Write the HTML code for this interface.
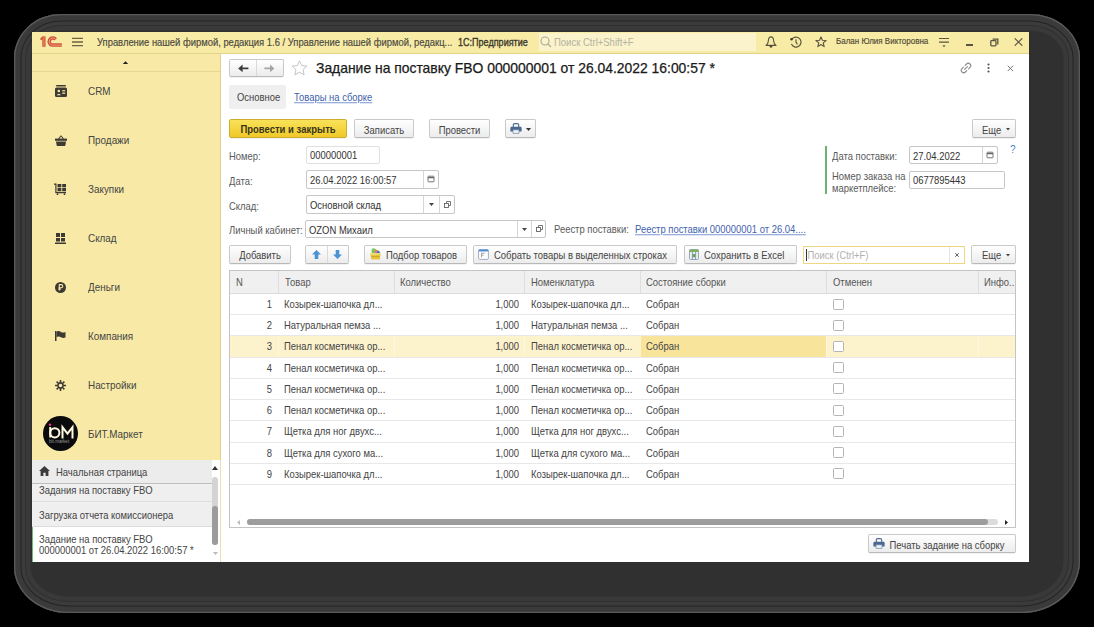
<!DOCTYPE html>
<html><head><meta charset="utf-8">
<style>
*{box-sizing:border-box;margin:0;padding:0}
html,body{width:1094px;height:627px;overflow:hidden;background:#000}
body{position:relative;font-family:"Liberation Sans",sans-serif;font-size:9.45px;color:#404040;}
.a{position:absolute;white-space:nowrap}
#frame{position:absolute;left:14px;top:14px;width:1066px;height:599px;border-radius:47px 50px 58px 54px / 44px 44px 52px 46px;background:#303030;box-shadow:inset 0 0 0 1.3px #5a5a5a, inset 0 0 0 6.5px #3a3a3a, inset 0 0 0 7.5px #242424, inset 0 0 0 11px #3b3b3b, inset 0 0 0 12px #2f2f2f, inset 0 0 0 16.5px #393939}
#app{position:absolute;left:32px;top:32px;width:997px;height:530px;background:#fff;overflow:hidden}
#titlebar{position:absolute;left:32px;top:32px;width:997px;height:22px;background:#f8eba6;border-bottom:1.5px solid #e2d38a}
#side{position:absolute;left:32px;top:54px;width:189px;height:406px;background:#f8eaa6;border-right:1px solid #e4d48c}
.btn{position:absolute;height:19px;border:1px solid #c9c9c9;border-bottom-color:#b9b9b9;border-radius:2px;background:linear-gradient(#ffffff,#ececec);box-shadow:0 1px 0 rgba(0,0,0,.05);color:#444;text-align:center;line-height:17px;padding-top:1.5px;white-space:nowrap}
.fld{position:absolute;height:18px;border:1px solid #c6c6c6;border-radius:2px;background:#fff;color:#333;line-height:17px;padding-left:3px;white-space:nowrap}
.lbl{position:absolute;color:#5a5a5a;white-space:nowrap}
.si{position:absolute;left:88px;color:#444;font-size:9.9px;white-space:nowrap}
.ic{position:absolute}
.t{display:inline-block;transform:scaleY(1.14);transform-origin:50% 75%}
</style></head><body>
<div id="frame"></div>
<div id="app"></div>
<div id="titlebar"></div>
<!-- title bar content -->
<svg class="ic" style="left:36px;top:33px" width="30" height="18" viewBox="0 0 30 18"><g fill="none" stroke-linecap="butt"><path d="M7.9 13.8V3.4" stroke="#cf5438" stroke-width="3.3"/><path d="M4.6 6.6L7 4.3" stroke="#cf5438" stroke-width="2"/><path d="M7.9 13.6V4" stroke="#f0a07c" stroke-width="0.8"/><path d="M19.6 6.4A3.55 3.55 0 1 0 16.6 12.1H25.8" stroke="#cf5438" stroke-width="3.5"/><path d="M19.6 6.4A3.55 3.55 0 1 0 16.6 12.1H25.8" stroke="#f2a384" stroke-width="0.9"/></g></svg>
<svg class="ic" style="left:72px;top:37px" width="11" height="10" viewBox="0 0 11 10">
  <g stroke="#6b6446" stroke-width="1.3"><path d="M0 1.3H11M0 5H11M0 8.7H11"/></g>
</svg>
<div class="a" style="left:97px;top:37px;font-size:9.42px;line-height:12px;color:#4a4a40;-webkit-text-stroke:0.15px #4a4a40"><span class="t">Управление нашей фирмой, редакция 1.6 / Управление нашей фирмой, редакц...</span></div>
<div class="a" style="left:458px;top:37px;font-size:9.05px;line-height:12px;color:#3a372c;-webkit-text-stroke:0.3px #3a372c"><span class="t">1С:Предприятие</span></div>
<div class="a" style="left:539px;top:33px;width:217px;height:18px;background:#fbf3cb"></div>
<svg class="ic" style="left:540px;top:36px" width="12" height="12" viewBox="0 0 12 12"><g fill="none" stroke="#aaa896" stroke-width="1.1"><circle cx="5" cy="5" r="4"/><path d="M8 8L11 11"/></g></svg>
<div class="a" style="left:554px;top:37px;font-size:9.5px;line-height:12px;color:#b4b2a2"><span class="t">Поиск Ctrl+Shift+F</span></div>
<!-- bell -->
<svg class="ic" style="left:765px;top:36px" width="12" height="12" viewBox="0 0 12 12"><g fill="none" stroke="#5a5540" stroke-width="1.15" stroke-linejoin="round"><path d="M6 0.9C4 0.9 3.4 2.8 3.3 5.2C3.2 7.2 2.6 8 1 9.4H11C9.4 8 8.8 7.2 8.7 5.2C8.6 2.8 8 0.9 6 0.9Z"/></g><path d="M4.3 9.8H7.7Q7.4 11.8 6 11.8Q4.6 11.8 4.3 9.8Z" fill="#4a4636"/></svg>
<!-- history -->
<svg class="ic" style="left:790px;top:36px" width="12" height="12" viewBox="0 0 12 12"><g fill="none" stroke="#5a5540" stroke-width="1.15"><path d="M1.9 3.2A5 5 0 1 1 1.4 8"/><path d="M6 3.3V6.3L7.5 8.4"/></g><circle cx="1.5" cy="3.3" r="1.25" fill="#3d3a2c"/></svg>
<!-- star -->
<svg class="ic" style="left:815px;top:36px" width="12" height="12" viewBox="0 0 12 12"><path d="M6 0.9L7.4 4.3L11.1 4.5L8.2 6.9L9.2 10.6L6 8.5L2.8 10.6L3.8 6.9L0.9 4.5L4.6 4.3Z" fill="none" stroke="#5a5540" stroke-width="1.1" stroke-linejoin="round"/></svg>
<div class="a" style="left:836px;top:36px;font-size:8px;line-height:12px;color:#4f4a38;-webkit-text-stroke:0.15px #4f4a38"><span class="t">Балан Юлия Викторовна</span></div>
<svg class="ic" style="left:939px;top:37px" width="10" height="11" viewBox="0 0 10 11"><g stroke="#5a5540" stroke-width="1.2"><path d="M0 1.5H10M0 5.2H10"/></g><path d="M3.3 8.4H6.7L5 10Z" fill="#3a3628"/></svg>
<div class="a" style="left:966px;top:44px;width:7px;height:1.5px;background:#5a5540"></div>
<svg class="ic" style="left:990px;top:38px" width="9" height="9" viewBox="0 0 9 9"><g fill="none" stroke="#5a5540" stroke-width="1.3"><rect x="0.8" y="2.6" width="5.2" height="5.2" rx="0.8"/><path d="M2.6 1.2H7.8V6.4"/></g></svg>
<svg class="ic" style="left:1014px;top:38px" width="9" height="8" viewBox="0 0 9 8"><g stroke="#5a5540" stroke-width="1.1"><path d="M0.7 0.3L8.3 7.7M8.3 0.3L0.7 7.7"/></g></svg>

<div id="side"></div>
<div class="a" style="left:32px;top:71px;width:188px;height:1px;background:#e6d690"></div>
<svg class="ic" style="left:122px;top:60.5px" width="7" height="3.5" viewBox="0 0 7 3.5"><path d="M0.3 3.5H6.7L3.5 0.3Z" fill="#222"/></svg>
<!-- CRM icon -->
<svg class="ic" style="left:55px;top:85px" width="12" height="12" viewBox="0 0 12 12"><g fill="#3d3a33"><rect x="1" y="0" width="10" height="1.6" rx="0.8"/><rect x="0" y="2.6" width="12" height="9.4" rx="1.5"/></g><g fill="#f8eaa6"><circle cx="3.8" cy="6" r="1.3"/><path d="M1.6 10.2 Q3.8 7.2 6 10.2Z"/><rect x="7.2" y="5.2" width="3" height="1.2"/><rect x="7.2" y="7.6" width="3" height="1.2"/></g></svg>
<div class="si" style="top:86px;line-height:12px"><span class="t">CRM</span></div>
<!-- basket -->
<svg class="ic" style="left:55px;top:135px" width="12" height="11" viewBox="0 0 12 11"><g fill="#3d3a33"><path d="M3 4 L5.5 0.5 L6.3 1 L4.3 4Z M9 4 L6.5 0.5 L5.7 1 L7.7 4Z"/><rect x="0" y="3.6" width="12" height="2.2"/><path d="M1 6.4H11L10.2 11H1.8Z"/></g></svg>
<div class="si" style="top:135px;line-height:12px"><span class="t">Продажи</span></div>
<!-- cart -->
<svg class="ic" style="left:54px;top:183px" width="13" height="12" viewBox="0 0 13 12"><g fill="#3d3a33"><path d="M0 0.5H2.5V9H12V10.2H1.3V1.7H0Z"/><rect x="3.5" y="1" width="3.8" height="3.3"/><rect x="8.2" y="1" width="3.8" height="3.3"/><rect x="3.5" y="5" width="3.8" height="3.3"/><rect x="8.2" y="5" width="3.8" height="3.3"/><circle cx="3.5" cy="11.2" r="0.9"/><circle cx="10.5" cy="11.2" r="0.9"/></g></svg>
<div class="si" style="top:184px;line-height:12px"><span class="t">Закупки</span></div>
<!-- warehouse -->
<svg class="ic" style="left:55px;top:233px" width="11" height="11" viewBox="0 0 11 11"><g fill="#3d3a33"><rect x="1" y="0" width="4" height="4"/><rect x="6" y="0" width="4" height="4"/><rect x="1" y="5" width="4" height="3.5"/><rect x="6" y="5" width="4" height="3.5"/><rect x="0" y="9.5" width="11" height="1.5"/></g></svg>
<div class="si" style="top:233px;line-height:12px"><span class="t">Склад</span></div>
<!-- money -->
<svg class="ic" style="left:55px;top:282px" width="11" height="11" viewBox="0 0 11 11"><circle cx="5.5" cy="5.5" r="5.5" fill="#3d3a33"/><path d="M4.3 8.6V2.6H6.2A1.6 1.6 0 0 1 6.2 5.8H3.4M3.4 7.1H5.8" fill="none" stroke="#f8eaa6" stroke-width="1.1"/></svg>
<div class="si" style="top:282px;line-height:12px"><span class="t">Деньги</span></div>
<!-- flag -->
<svg class="ic" style="left:55px;top:331px" width="11" height="10" viewBox="0 0 11 10"><g fill="#3d3a33"><rect x="0" y="0" width="1.5" height="10"/><path d="M1.5 0.5 Q4 -0.5 6 1 Q8 2 10.5 1 V6.5 Q8 7.5 6 6.3 Q4 5 1.5 6Z"/></g></svg>
<div class="si" style="top:331px;line-height:12px"><span class="t">Компания</span></div>
<!-- gear -->
<svg class="ic" style="left:55px;top:380px" width="11" height="11" viewBox="0 0 11 11"><g fill="none" stroke="#3d3a33"><circle cx="5.5" cy="5.5" r="2.6" stroke-width="1.6"/><path d="M5.5 0V2M5.5 9V11M0 5.5H2M9 5.5H11M1.6 1.6L3 3M8 8L9.4 9.4M1.6 9.4L3 8M8 3L9.4 1.6" stroke-width="1.6"/></g></svg>
<div class="si" style="top:380px;line-height:12px"><span class="t">Настройки</span></div>
<!-- BIT logo -->
<svg class="ic" style="left:43px;top:416px" width="35" height="35" viewBox="0 0 35 35"><circle cx="17.5" cy="17.5" r="17.5" fill="#0b0a0c"/><g fill="none" stroke="#fff8e0" stroke-width="2"><circle cx="11.8" cy="16.8" r="4.6"/><path d="M7.2 11V21.5"/><path d="M19.5 22.6V11.2L24.5 17.6L29.5 11.2V22.6"/></g><circle cx="7" cy="8.8" r="1.3" fill="#e0338a"/><text x="6" y="27.3" font-family="Liberation Sans" font-size="4.6" fill="#9a9a9a">bit.market</text></svg>
<div class="si" style="top:429px;line-height:12px"><span class="t">БИТ.Маркет</span></div>
<!-- open windows panel -->
<div class="a" style="left:32px;top:460px;width:188px;height:102px;background:#f2f2f2"></div>
<div class="a" style="left:32px;top:460px;width:180px;height:24px;background:#ececec;border-bottom:1px solid #bdbdbd"></div>
<svg class="ic" style="left:39px;top:466px" width="11" height="10" viewBox="0 0 11 10"><path d="M5.5 0L11 5H9.4V10H6.6V6.8H4.4V10H1.6V5H0Z" fill="#3b3b3b"/></svg>
<div class="a" style="left:56px;top:467px;line-height:12px;color:#444"><span class="t">Начальная страница</span></div>
<div class="a" style="left:32px;top:485px;width:180px;height:17px;background:#efefef;border-bottom:1px solid #dcdcdc"></div>
<div class="a" style="left:39px;top:485px;line-height:12px;color:#444"><span class="t">Задания на поставку FBO</span></div>
<div class="a" style="left:32px;top:503px;width:180px;height:24px;background:#efefef;border-bottom:1px solid #dcdcdc"></div>
<div class="a" style="left:39px;top:509.5px;line-height:12px;color:#444"><span class="t">Загрузка отчета комиссионера</span></div>
<div class="a" style="left:32px;top:527px;width:180px;height:35px;background:#fff;border-left:1.5px solid #6cbc74"></div>
<div class="a" style="left:39px;top:533.5px;line-height:12px;color:#444"><span class="t">Задание на поставку FBO</span></div>
<div class="a" style="left:39px;top:544.5px;line-height:12px;color:#444"><span class="t">000000001 от 26.04.2022 16:00:57 *</span></div>
<div class="a" style="left:212px;top:460px;width:8px;height:102px;background:#fff"></div>
<svg class="ic" style="left:212px;top:466px" width="6" height="4" viewBox="0 0 6 4"><path d="M0 4H6L3 0Z" fill="#333"/></svg>
<div class="a" style="left:212px;top:477px;width:6px;height:68px;border-radius:3px;background:#d4d4d4"></div>
<div class="a" style="left:212px;top:506px;width:6px;height:39px;border-radius:3px;background:#9c9c9c"></div>
<svg class="ic" style="left:213px;top:552px" width="5" height="3" viewBox="0 0 5 3"><path d="M0 0H5L2.5 3Z" fill="#bbb"/></svg>
<div class="a" style="left:219.5px;top:54px;width:1.5px;height:406px;background:#dfd28f"></div>
<div class="a" style="left:220px;top:460px;width:1px;height:102px;background:#e8e0b4"></div>
<!-- ===== MAIN FORM ===== -->
<!-- nav buttons -->
<div class="btn" style="left:229px;top:59px;width:55px;height:18px"></div>
<div class="a" style="left:256px;top:60px;width:1px;height:16px;background:#dadada"></div>
<svg class="ic" style="left:238px;top:64px" width="11" height="9" viewBox="0 0 11 9"><path d="M0.2 4.4L4.6 0.6V3.5H10.4V5.3H4.6V8.2Z" fill="#3c3c3c"/></svg>
<svg class="ic" style="left:264px;top:64px" width="11" height="9" viewBox="0 0 11 9"><path d="M10.4 4.4L6 0.6V3.5H0.4V5.3H6V8.2Z" fill="#a4a4a4"/></svg>
<svg class="ic" style="left:291px;top:60px" width="17" height="16" viewBox="0 0 17 16"><path d="M8.5 0.8L10.7 5.6L15.9 6.1L12 9.6L13.1 14.8L8.5 12.2L3.9 14.8L5 9.6L1.1 6.1L6.3 5.6Z" fill="none" stroke="#c4c4c4" stroke-width="1" stroke-linejoin="round"/></svg>
<div class="a" style="left:316px;top:62px;font-size:13.9px;line-height:12px;color:#1a1a1a;-webkit-text-stroke:0.25px #1a1a1a">Задание на поставку FBO 000000001 от 26.04.2022 16:00:57 *</div>
<!-- header right icons -->
<svg class="ic" style="left:960px;top:62px" width="12" height="12" viewBox="0 0 12 12"><g fill="none" stroke="#8a8a8a" stroke-width="1.1" stroke-linecap="round"><path d="M5.2 3.4L6.6 2A2.2 2.2 0 0 1 10 5.4L8.6 6.8"/><path d="M6.8 8.6L5.4 10A2.2 2.2 0 0 1 2 6.6L3.4 5.2"/><path d="M4.6 7.4L7.4 4.6"/></g></svg>
<svg class="ic" style="left:987px;top:63px" width="3" height="10" viewBox="0 0 3 10"><g fill="#555"><circle cx="1.5" cy="1.5" r="1.1"/><circle cx="1.5" cy="5" r="1.1"/><circle cx="1.5" cy="8.5" r="1.1"/></g></svg>
<svg class="ic" style="left:1007px;top:64.5px" width="7" height="7" viewBox="0 0 7 7"><g stroke="#777" stroke-width="1"><path d="M0.7 0.7L6.1 6.1M6.1 0.7L0.7 6.1"/></g></svg>
<!-- tabs -->
<div class="a" style="left:229px;top:85px;width:57px;height:24px;background:#efefef;border-radius:2px"></div>
<div class="a" style="left:237px;top:92px;line-height:12px;color:#444"><span class="t">Основное</span></div>
<div class="a" style="left:294px;top:92px;line-height:12px;color:#3f63ad;text-decoration:underline;text-decoration-color:#8aa3d6"><span class="t" style="text-decoration:underline;text-decoration-color:#8aa3d6">Товары на сборке</span></div>
<!-- command bar -->
<div class="btn" style="left:229px;top:119px;width:118px;background:linear-gradient(#f9e25a,#efc928);border-color:#cfae2e;color:#38351f;font-weight:bold;font-size:9.5px;padding-top:1px"><span class="t">Провести и закрыть</span></div>
<div class="btn" style="left:354px;top:119px;width:60px"><span class="t">Записать</span></div>
<div class="btn" style="left:429px;top:119px;width:61px"><span class="t">Провести</span></div>
<div class="btn" style="left:505px;top:119px;width:31px"></div>
<svg class="ic" style="left:510px;top:123px" width="12" height="11" viewBox="0 0 12 11"><path d="M3.3 4V2Q3.3 0.6 4.8 0.6H7.2Q8.7 0.6 8.7 2V4" fill="none" stroke="#50698c" stroke-width="1.1"/><path d="M1.5 3.8H10.5Q11.6 3.8 11.6 5.2V8.6H0.4V5.2Q0.4 3.8 1.5 3.8Z" fill="#4a6790"/><path d="M3 6.8H9V10.4H3Z" fill="#eef3f8" stroke="#6d86a8" stroke-width="0.7"/></svg>
<svg class="ic" style="left:526px;top:128px" width="5" height="3" viewBox="0 0 5 3"><path d="M0 0H5L2.5 3Z" fill="#333"/></svg>
<div class="btn" style="left:972px;top:119px;width:44px;text-align:left;padding-left:9px"><span class="t">Еще</span></div>
<svg class="ic" style="left:1006px;top:128px" width="4" height="3" viewBox="0 0 4 3"><path d="M0 0H4L2 2.6Z" fill="#444"/></svg>
<!-- fields left -->
<div class="lbl" style="left:229px;top:150.5px;line-height:12px"><span class="t">Номер:</span></div>
<div class="fld" style="left:306px;top:146px;width:74px;height:18px;border-color:#e0e0e0;padding-top:0px"><span class="t">000000001</span></div>
<div class="lbl" style="left:229px;top:175.5px;line-height:12px"><span class="t">Дата:</span></div>
<div class="fld" style="left:306px;top:170px;width:133px;height:19px;padding-top:1px"><span class="t">26.04.2022 16:00:57</span></div>
<div class="a" style="left:423px;top:171px;width:1px;height:17px;background:#d6d6d6"></div>
<svg class="ic" style="left:427px;top:175px" width="8" height="8" viewBox="0 0 8 8"><g fill="none" stroke="#666" stroke-width="0.9"><rect x="1" y="1.2" width="6" height="5.6" rx="0.6"/><path d="M1 2.6H7" stroke-width="1.3"/></g></svg>
<div class="lbl" style="left:229px;top:200.5px;line-height:12px"><span class="t">Склад:</span></div>
<div class="fld" style="left:306px;top:195px;width:149px;height:19px;padding-top:1px"><span class="t">Основной склад</span></div>
<div class="a" style="left:423px;top:196px;width:1px;height:17px;background:#d6d6d6"></div>
<div class="a" style="left:439px;top:196px;width:1px;height:17px;background:#d6d6d6"></div>
<svg class="ic" style="left:429px;top:203px" width="5" height="3" viewBox="0 0 5 3"><path d="M0 0H5L2.5 3Z" fill="#444"/></svg>
<svg class="ic" style="left:443px;top:200px" width="9" height="9" viewBox="0 0 9 9"><g fill="none" stroke="#666" stroke-width="0.9"><rect x="1.5" y="3.5" width="4" height="4"/><path d="M3.5 3.5V1.5H7.5V5.5H5.5"/></g></svg>
<div class="lbl" style="left:229px;top:225px;line-height:12px"><span class="t">Личный кабинет:</span></div>
<div class="fld" style="left:305px;top:220px;width:241px;height:18px;padding-top:1px"><span class="t">OZON Михаил</span></div>
<div class="a" style="left:517px;top:221px;width:1px;height:16px;background:#d6d6d6"></div>
<div class="a" style="left:531px;top:221px;width:1px;height:16px;background:#d6d6d6"></div>
<svg class="ic" style="left:522px;top:228px" width="5" height="3" viewBox="0 0 5 3"><path d="M0 0H5L2.5 3Z" fill="#444"/></svg>
<svg class="ic" style="left:535px;top:224px" width="9" height="9" viewBox="0 0 9 9"><g fill="none" stroke="#666" stroke-width="0.9"><rect x="1.5" y="3.5" width="4" height="4"/><path d="M3.5 3.5V1.5H7.5V5.5H5.5"/></g></svg>
<div class="lbl" style="left:554px;top:224px;line-height:12px"><span class="t">Реестр поставки:</span></div>
<div class="a" style="left:635px;top:224px;line-height:12px;color:#3f63ad;text-decoration:underline;text-decoration-color:#8aa3d6"><span class="t" style="text-decoration:underline;text-decoration-color:#8aa3d6">Реестр поставки 000000001 от 26.04....</span></div>
<!-- fields right -->
<div class="a" style="left:825px;top:146px;width:2px;height:48px;background:#6bb36f"></div>
<div class="lbl" style="left:832px;top:150.5px;line-height:12px"><span class="t">Дата поставки:</span></div>
<div class="fld" style="left:909px;top:146px;width:89px;height:18px;padding-top:0.5px"><span class="t">27.04.2022</span></div>
<div class="a" style="left:982px;top:147px;width:1px;height:16px;background:#d6d6d6"></div>
<svg class="ic" style="left:986px;top:151px" width="8" height="8" viewBox="0 0 8 8"><g fill="none" stroke="#666" stroke-width="0.9"><rect x="1" y="1.2" width="6" height="5.6" rx="0.6"/><path d="M1 2.6H7" stroke-width="1.3"/></g></svg>
<div class="a" style="left:1010px;top:144px;line-height:12px;color:#3f84c8;font-size:10px"><span class="t">?</span></div>
<div class="lbl" style="left:832px;top:170.5px;line-height:12px"><span class="t">Номер заказа на</span><br><span class="t">маркетплейсе:</span></div>
<div class="fld" style="left:909px;top:171px;width:96px;height:18px;padding-top:0px"><span class="t">0677895443</span></div>
<!-- table toolbar -->
<div class="btn" style="left:229px;top:245px;width:62px;padding-top:1px"><span class="t">Добавить</span></div>
<div class="btn" style="left:305px;top:245px;width:44px;padding-top:1px"></div>
<div class="a" style="left:327px;top:246px;width:1px;height:17px;background:#dadada"></div>
<svg class="ic" style="left:312px;top:250px" width="9" height="9" viewBox="0 0 9 9"><path d="M4.5 0L9 4.5H6.3V9H2.7V4.5H0Z" fill="#4b93d2"/></svg>
<svg class="ic" style="left:333px;top:250px" width="9" height="9" viewBox="0 0 9 9"><path d="M4.5 9L9 4.5H6.3V0H2.7V4.5H0Z" fill="#4b93d2"/></svg>
<div class="btn" style="left:364px;top:245px;width:103px;text-align:left;padding-left:21px;padding-top:1px"><span class="t">Подбор товаров</span></div>
<svg class="ic" style="left:370px;top:248px" width="11" height="12" viewBox="0 0 11 12"><ellipse cx="3.8" cy="3" rx="2.3" ry="2.8" fill="#74c95a"/><circle cx="6.7" cy="4" r="2.3" fill="#e0806c"/><circle cx="8.3" cy="4.8" r="1.8" fill="#4f72cc"/><path d="M0.3 5.3H10.7L9.8 11.6H1.2Z" fill="#e9c53e"/><path d="M0.3 5.3H10.7V6.6H0.3Z" fill="#f7e58a"/><path d="M1.2 8.6H9.8" stroke="#c29a2a" stroke-width="0.8"/></svg>
<div class="btn" style="left:473px;top:245px;width:204px;text-align:left;padding-left:20px;padding-top:1px"><span class="t">Собрать товары в выделенных строках</span></div>
<svg class="ic" style="left:478px;top:249px" width="11" height="11" viewBox="0 0 11 11"><rect x="0.6" y="0.6" width="9.8" height="9.8" rx="1.2" fill="#fff" stroke="#a3adc0" stroke-width="1"/><rect x="0.6" y="0.6" width="9.8" height="2" rx="0.8" fill="#4f8fd6"/><path d="M3.5 8.6V4.3H6.8M3.5 6.2H5.6" fill="none" stroke="#a8a8a0" stroke-width="1.1"/></svg>
<div class="btn" style="left:684px;top:245px;width:113px;text-align:left;padding-left:19px;padding-top:1px"><span class="t">Сохранить в Excel</span></div>
<svg class="ic" style="left:689px;top:249px" width="10" height="11" viewBox="0 0 10 11"><rect x="0.5" y="0.5" width="9" height="10" rx="1" fill="#e9eef6" stroke="#8e9db5" stroke-width="0.9"/><rect x="0.5" y="0.5" width="9" height="2.6" rx="0.8" fill="#7fb45a"/><path d="M3.4 2.5V10.5M6.6 2.5V10.5" stroke="#7b8aa3" stroke-width="0.8"/><rect x="3.6" y="5" width="2.8" height="3.2" fill="#6aa84f"/></svg>
<div class="a" style="left:803px;top:246px;width:162px;height:18px;border:1px solid #efd783;background:#fff"></div>
<div class="a" style="left:806px;top:249px;width:1px;height:12px;background:#333"></div>
<div class="a" style="left:807.5px;top:249.5px;line-height:12px;color:#b0b0b0"><span class="t">Поиск (Ctrl+F)</span></div>
<div class="a" style="left:949px;top:247px;width:1px;height:16px;background:#e3e3e3"></div>
<svg class="ic" style="left:954px;top:252px" width="6" height="6" viewBox="0 0 6 6"><g stroke="#666" stroke-width="1"><path d="M1.2 1.2L4.8 4.8M4.8 1.2L1.2 4.8"/></g></svg>
<div class="btn" style="left:971px;top:245px;width:45px;text-align:left;padding-left:10px;padding-top:1px"><span class="t">Еще</span></div>
<svg class="ic" style="left:1006px;top:254px" width="4" height="3" viewBox="0 0 4 3"><path d="M0 0H4L2 2.6Z" fill="#444"/></svg>
<!-- table -->
<div class="a" style="left:229px;top:270px;width:787px;height:258px;border:1px solid #c4c4c4;background:#fff"></div>
<div class="a" style="left:230px;top:271px;width:785px;height:23px;background:#f0f0f0;border-bottom:1px solid #dcdcdc"></div>
<div class="a" style="left:278px;top:271px;width:1px;height:22px;background:#dedede"></div>
<div class="a" style="left:394px;top:271px;width:1px;height:22px;background:#dedede"></div>
<div class="a" style="left:524px;top:271px;width:1px;height:22px;background:#dedede"></div>
<div class="a" style="left:640px;top:271px;width:1px;height:22px;background:#dedede"></div>
<div class="a" style="left:826px;top:271px;width:1px;height:22px;background:#dedede"></div>
<div class="a" style="left:978px;top:271px;width:1px;height:22px;background:#dedede"></div>
<div class="a" style="left:236px;top:276.5px;line-height:12px;color:#555"><span class="t">N</span></div>
<div class="a" style="left:285px;top:276.5px;line-height:12px;color:#555"><span class="t">Товар</span></div>
<div class="a" style="left:400px;top:276.5px;line-height:12px;color:#555"><span class="t">Количество</span></div>
<div class="a" style="left:531px;top:276.5px;line-height:12px;color:#555"><span class="t">Номенклатура</span></div>
<div class="a" style="left:646px;top:276.5px;line-height:12px;color:#555"><span class="t">Состояние сборки</span></div>
<div class="a" style="left:833px;top:276.5px;line-height:12px;color:#555"><span class="t">Отменен</span></div>
<div class="a" style="left:984px;top:276.5px;line-height:12px;color:#555"><span class="t">Инфо..</span></div>
<div class="a" style="left:230px;top:314.22px;width:785px;height:1px;background:#e8e8e8"></div>
<div class="a" style="left:230px;top:299.00px;width:42px;text-align:right;line-height:12px;color:#444"><span class="t">1</span></div>
<div class="a" style="left:284px;top:299.00px;line-height:12px;color:#444"><span class="t">Козырек-шапочка дл...</span></div>
<div class="a" style="left:395px;top:299.00px;width:124px;text-align:right;line-height:12px;color:#444"><span class="t">1,000</span></div>
<div class="a" style="left:531px;top:299.00px;line-height:12px;color:#444"><span class="t">Козырек-шапочка дл...</span></div>
<div class="a" style="left:646px;top:299.00px;line-height:12px;color:#444"><span class="t">Собран</span></div>
<div class="a" style="left:833px;top:298.50px;width:11px;height:11px;border:1px solid #b4b4b4;border-radius:1.5px;background:#fff"></div>
<div class="a" style="left:230px;top:335.44px;width:785px;height:1px;background:#e8e8e8"></div>
<div class="a" style="left:230px;top:320.22px;width:42px;text-align:right;line-height:12px;color:#444"><span class="t">2</span></div>
<div class="a" style="left:284px;top:320.22px;line-height:12px;color:#444"><span class="t">Натуральная пемза ...</span></div>
<div class="a" style="left:395px;top:320.22px;width:124px;text-align:right;line-height:12px;color:#444"><span class="t">1,000</span></div>
<div class="a" style="left:531px;top:320.22px;line-height:12px;color:#444"><span class="t">Натуральная пемза ...</span></div>
<div class="a" style="left:646px;top:320.22px;line-height:12px;color:#444"><span class="t">Собран</span></div>
<div class="a" style="left:833px;top:319.72px;width:11px;height:11px;border:1px solid #b4b4b4;border-radius:1.5px;background:#fff"></div>
<div class="a" style="left:230px;top:336.44px;width:785px;height:21.22px;background:#fcf2cc"></div>
<div class="a" style="left:278px;top:336.44px;width:1px;height:20.2px;background:#fdf7e2"></div><div class="a" style="left:394px;top:336.44px;width:1px;height:20.2px;background:#fdf7e2"></div><div class="a" style="left:524px;top:336.44px;width:1px;height:20.2px;background:#fdf7e2"></div><div class="a" style="left:826px;top:336.44px;width:1px;height:20.2px;background:#fdf7e2"></div><div class="a" style="left:978px;top:336.44px;width:1px;height:20.2px;background:#fdf7e2"></div>
<div class="a" style="left:641px;top:336.44px;width:185px;height:21.22px;background:#f9e49c"></div>
<div class="a" style="left:230px;top:356.66px;width:785px;height:1px;background:#e8e8e8"></div>
<div class="a" style="left:230px;top:341.44px;width:42px;text-align:right;line-height:12px;color:#444"><span class="t">3</span></div>
<div class="a" style="left:284px;top:341.44px;line-height:12px;color:#444"><span class="t">Пенал косметичка ор...</span></div>
<div class="a" style="left:395px;top:341.44px;width:124px;text-align:right;line-height:12px;color:#444"><span class="t">1,000</span></div>
<div class="a" style="left:531px;top:341.44px;line-height:12px;color:#444"><span class="t">Пенал косметичка ор...</span></div>
<div class="a" style="left:646px;top:341.44px;line-height:12px;color:#444"><span class="t">Собран</span></div>
<div class="a" style="left:833px;top:340.94px;width:11px;height:11px;border:1px solid #b4b4b4;border-radius:1.5px;background:#fff"></div>
<div class="a" style="left:230px;top:377.88px;width:785px;height:1px;background:#e8e8e8"></div>
<div class="a" style="left:230px;top:362.66px;width:42px;text-align:right;line-height:12px;color:#444"><span class="t">4</span></div>
<div class="a" style="left:284px;top:362.66px;line-height:12px;color:#444"><span class="t">Пенал косметичка ор...</span></div>
<div class="a" style="left:395px;top:362.66px;width:124px;text-align:right;line-height:12px;color:#444"><span class="t">1,000</span></div>
<div class="a" style="left:531px;top:362.66px;line-height:12px;color:#444"><span class="t">Пенал косметичка ор...</span></div>
<div class="a" style="left:646px;top:362.66px;line-height:12px;color:#444"><span class="t">Собран</span></div>
<div class="a" style="left:833px;top:362.16px;width:11px;height:11px;border:1px solid #b4b4b4;border-radius:1.5px;background:#fff"></div>
<div class="a" style="left:230px;top:399.10px;width:785px;height:1px;background:#e8e8e8"></div>
<div class="a" style="left:230px;top:383.88px;width:42px;text-align:right;line-height:12px;color:#444"><span class="t">5</span></div>
<div class="a" style="left:284px;top:383.88px;line-height:12px;color:#444"><span class="t">Пенал косметичка ор...</span></div>
<div class="a" style="left:395px;top:383.88px;width:124px;text-align:right;line-height:12px;color:#444"><span class="t">1,000</span></div>
<div class="a" style="left:531px;top:383.88px;line-height:12px;color:#444"><span class="t">Пенал косметичка ор...</span></div>
<div class="a" style="left:646px;top:383.88px;line-height:12px;color:#444"><span class="t">Собран</span></div>
<div class="a" style="left:833px;top:383.38px;width:11px;height:11px;border:1px solid #b4b4b4;border-radius:1.5px;background:#fff"></div>
<div class="a" style="left:230px;top:420.32px;width:785px;height:1px;background:#e8e8e8"></div>
<div class="a" style="left:230px;top:405.10px;width:42px;text-align:right;line-height:12px;color:#444"><span class="t">6</span></div>
<div class="a" style="left:284px;top:405.10px;line-height:12px;color:#444"><span class="t">Пенал косметичка ор...</span></div>
<div class="a" style="left:395px;top:405.10px;width:124px;text-align:right;line-height:12px;color:#444"><span class="t">1,000</span></div>
<div class="a" style="left:531px;top:405.10px;line-height:12px;color:#444"><span class="t">Пенал косметичка ор...</span></div>
<div class="a" style="left:646px;top:405.10px;line-height:12px;color:#444"><span class="t">Собран</span></div>
<div class="a" style="left:833px;top:404.60px;width:11px;height:11px;border:1px solid #b4b4b4;border-radius:1.5px;background:#fff"></div>
<div class="a" style="left:230px;top:441.54px;width:785px;height:1px;background:#e8e8e8"></div>
<div class="a" style="left:230px;top:426.32px;width:42px;text-align:right;line-height:12px;color:#444"><span class="t">7</span></div>
<div class="a" style="left:284px;top:426.32px;line-height:12px;color:#444"><span class="t">Щетка для ног двухс...</span></div>
<div class="a" style="left:395px;top:426.32px;width:124px;text-align:right;line-height:12px;color:#444"><span class="t">1,000</span></div>
<div class="a" style="left:531px;top:426.32px;line-height:12px;color:#444"><span class="t">Щетка для ног двухс...</span></div>
<div class="a" style="left:646px;top:426.32px;line-height:12px;color:#444"><span class="t">Собран</span></div>
<div class="a" style="left:833px;top:425.82px;width:11px;height:11px;border:1px solid #b4b4b4;border-radius:1.5px;background:#fff"></div>
<div class="a" style="left:230px;top:462.76px;width:785px;height:1px;background:#e8e8e8"></div>
<div class="a" style="left:230px;top:447.54px;width:42px;text-align:right;line-height:12px;color:#444"><span class="t">8</span></div>
<div class="a" style="left:284px;top:447.54px;line-height:12px;color:#444"><span class="t">Щетка для сухого ма...</span></div>
<div class="a" style="left:395px;top:447.54px;width:124px;text-align:right;line-height:12px;color:#444"><span class="t">1,000</span></div>
<div class="a" style="left:531px;top:447.54px;line-height:12px;color:#444"><span class="t">Щетка для сухого ма...</span></div>
<div class="a" style="left:646px;top:447.54px;line-height:12px;color:#444"><span class="t">Собран</span></div>
<div class="a" style="left:833px;top:447.04px;width:11px;height:11px;border:1px solid #b4b4b4;border-radius:1.5px;background:#fff"></div>
<div class="a" style="left:230px;top:483.98px;width:785px;height:1px;background:#e8e8e8"></div>
<div class="a" style="left:230px;top:468.76px;width:42px;text-align:right;line-height:12px;color:#444"><span class="t">9</span></div>
<div class="a" style="left:284px;top:468.76px;line-height:12px;color:#444"><span class="t">Козырек-шапочка дл...</span></div>
<div class="a" style="left:395px;top:468.76px;width:124px;text-align:right;line-height:12px;color:#444"><span class="t">1,000</span></div>
<div class="a" style="left:531px;top:468.76px;line-height:12px;color:#444"><span class="t">Козырек-шапочка дл...</span></div>
<div class="a" style="left:646px;top:468.76px;line-height:12px;color:#444"><span class="t">Собран</span></div>
<div class="a" style="left:833px;top:468.26px;width:11px;height:11px;border:1px solid #b4b4b4;border-radius:1.5px;background:#fff"></div>
<svg class="ic" style="left:237px;top:520px" width="3" height="5" viewBox="0 0 3 5"><path d="M3 0V5L0 2.5Z" fill="#bbb"/></svg>
<div class="a" style="left:247px;top:519px;width:751px;height:6px;border-radius:3px;background:#dcdcdc"></div>
<div class="a" style="left:247px;top:519px;width:741px;height:6px;border-radius:3px;background:#9d9d9d"></div>
<svg class="ic" style="left:1005px;top:520px" width="3" height="5" viewBox="0 0 3 5"><path d="M0 0V5L3 2.5Z" fill="#222"/></svg>
<div class="btn" style="left:868px;top:534px;width:148px;text-align:left;padding-left:20.5px;padding-top:1.5px"><span class="t">Печать задание на сборку</span></div>
<svg class="ic" style="left:873px;top:538px" width="12" height="11" viewBox="0 0 12 11"><path d="M3.3 4V2Q3.3 0.6 4.8 0.6H7.2Q8.7 0.6 8.7 2V4" fill="none" stroke="#50698c" stroke-width="1.1"/><path d="M1.5 3.8H10.5Q11.6 3.8 11.6 5.2V8.6H0.4V5.2Q0.4 3.8 1.5 3.8Z" fill="#4a6790"/><path d="M3 6.8H9V10.4H3Z" fill="#eef3f8" stroke="#6d86a8" stroke-width="0.7"/></svg>
</body></html>
